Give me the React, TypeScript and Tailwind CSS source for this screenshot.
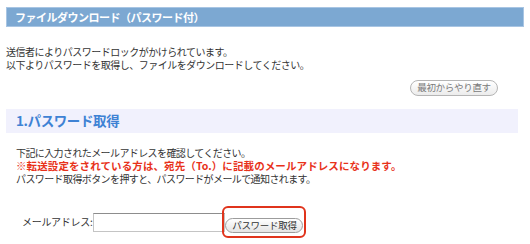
import React from 'react';

const font = { fontFamily: '"Noto Sans CJK JP", "Noto Sans", sans-serif' };

export default function App() {
    return (
        <div className="w-[530px] h-[244px] bg-white overflow-hidden px-[6px] pt-[7px] text-[#333]" style={font}>
            <div className="h-[20px] bg-[#7ca8d2] border border-[#a8c5e3] flex items-center pl-[8px]">
                <h1 className="text-[11px] font-bold text-white tracking-[-0.5px] leading-none">ファイルダウンロード（パスワード付）</h1>
            </div>

            <div className="mt-[18px] text-[10px] leading-[13px] tracking-[-0.5px]">
                <p>送信者によりパスワードロックがかけられています。</p>
                <p>以下よりパスワードを取得し、ファイルをダウンロードしてください。</p>
            </div>

            <div className="flex justify-end pr-[26px] mt-[9px]">
                <button className="h-[16px] w-[88px] rounded-full border border-[#b5b5b5] bg-gradient-to-b from-white to-[#ececec] text-[9.5px] text-[#7a7a7a] tracking-[-0.3px] leading-none">
                    最初からやり直す
                </button>
            </div>

            <div className="mt-[13px] mr-[6px] h-[24px] bg-[#f1f1fd] flex items-center pl-[10px]">
                <h2 className="text-[13.5px] font-bold text-[#3e82d4] tracking-[-0.4px] leading-none">1.パスワード取得</h2>
            </div>

            <div className="mt-[13px] pl-[10px] text-[10px] leading-[13px] tracking-[-0.6px]">
                <p>下記に入力されたメールアドレスを確認してください。</p>
                <p className="font-bold text-[#e8321a] text-[10.5px] tracking-[0.1px]">※転送設定をされている方は、宛先（To.）に記載のメールアドレスになります。</p>
                <p>パスワード取得ボタンを押すと、パスワードがメールで通知されます。</p>
            </div>

            <div className="mt-[21px] flex items-center pl-[16px]">
                <label className="text-[10px] tracking-[-0.3px] leading-none mr-[1px]">メールアドレス:</label>
                <input type="text" className="w-[132px] h-[19px] border border-[#c4c4c4] border-t-[#8d8d8d] bg-white" />
                <div className="ml-[-3px] rounded-[6px] border-2 border-[#e0341c] px-[1px] py-[2px]">
                    <button className="h-[15px] w-[78px] rounded-full border border-[#9c9c9c] bg-gradient-to-b from-white to-[#e4e4e4] text-[9.5px] text-[#333] tracking-[-0.3px] leading-none">
                        パスワード取得
                    </button>
                </div>
            </div>
        </div>
    );
}
